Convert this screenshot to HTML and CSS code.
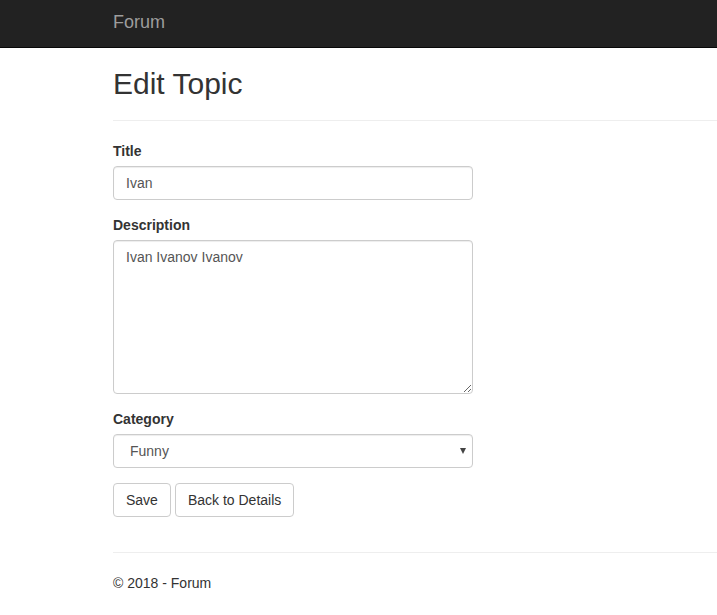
FILE: index.html
```html
<!DOCTYPE html>
<html>
<head>
<meta charset="utf-8">
<title>Edit Topic - Forum</title>
<link rel="stylesheet" href="styles.css">
</head>
<body>
<div class="navbar">
  <div class="navbar-inner">
    <a class="brand" href="#">Forum</a>
  </div>
</div>
<div class="container">
  <h2 class="page-title">Edit Topic</h2>
  <hr class="rule">
  <form class="form">
    <div class="form-group">
      <label class="label" for="title">Title</label>
      <input class="control" id="title" type="text" value="Ivan">
    </div>
    <div class="form-group">
      <label class="label" for="desc">Description</label>
      <textarea class="control textarea" id="desc">Ivan Ivanov Ivanov</textarea>
    </div>
    <div class="form-group">
      <label class="label" for="cat">Category</label>
      <div class="select-wrap">
        <select class="control select" id="cat">
          <option>Funny</option>
          <option>Serious</option>
        </select>
      </div>
    </div>
    <div class="form-group actions">
      <button class="btn" type="button">Save</button>
      <a class="btn" href="#">Back to Details</a>
    </div>
  </form>
  <hr class="rule">
  <footer class="footer">
    <p class="footer-text">© 2018 - Forum</p>
  </footer>
</div>
</body>
</html>
```
FILE: styles.css
```css
html, body {
  margin: 0;
  padding: 0;
  overflow-x: hidden;
}
body {
  font-family: "Liberation Sans", Arial, sans-serif;
  font-size: 14px;
  line-height: 1.42857143;
  color: #333;
  background: #fff;
}
.navbar {
  background: #222;
  border-bottom: 1px solid #080808;
  height: 47px;
}
.navbar-inner {
  padding-left: 113px;
}
.brand {
  display: block;
  width: max-content;
  font-size: 18px;
  line-height: 20px;
  padding: 12px 0;
  color: #9d9d9d;
  text-decoration: none;
}
.container {
  padding-left: 113px;
}
.page-title {
  font-size: 30px;
  font-weight: 500;
  line-height: 1.1;
  margin: 19px 0 10px;
}
.rule {
  border: 0;
  border-top: 1px solid #eee;
  margin: 20px 0;
  height: 0;
}
.form {
  display: flow-root;
  width: 360px;
}
.form-group {
  margin-bottom: 15px;
}
.label {
  display: block;
  font-weight: 700;
  margin-bottom: 5px;
  line-height: 20px;
}
.control {
  display: block;
  box-sizing: border-box;
  width: 100%;
  height: 34px;
  padding: 6px 12px;
  font-family: inherit;
  font-size: 14px;
  line-height: 1.42857143;
  color: #555;
  background: #fff;
  border: 1px solid #ccc;
  border-radius: 4px;
  box-shadow: inset 0 1px 1px rgba(0,0,0,.075);
  margin: 0;
}
.textarea {
  height: 154px;
  resize: vertical;
  padding-top: 6px;
}
.select-wrap {
  position: relative;
}
.select {
  -webkit-appearance: none;
  appearance: none;
  padding-left: 16px;
}
.select-wrap::after {
  content: "";
  position: absolute;
  right: 7px;
  top: 14px;
  border-left: 3.5px solid transparent;
  border-right: 3.5px solid transparent;
  border-top: 6px solid #444;
  pointer-events: none;
}
.actions {
  display: flex;
  gap: 4px;
}
.btn {
  display: inline-block;
  box-sizing: border-box;
  height: 34px;
  padding: 6px 12px;
  font-family: inherit;
  font-size: 14px;
  line-height: 20px;
  color: #333;
  background: #fff;
  border: 1px solid #ccc;
  border-radius: 4px;
  text-decoration: none;
  cursor: pointer;
}
.footer-text {
  margin: 0 0 10px;
  line-height: 20px;
}
```
